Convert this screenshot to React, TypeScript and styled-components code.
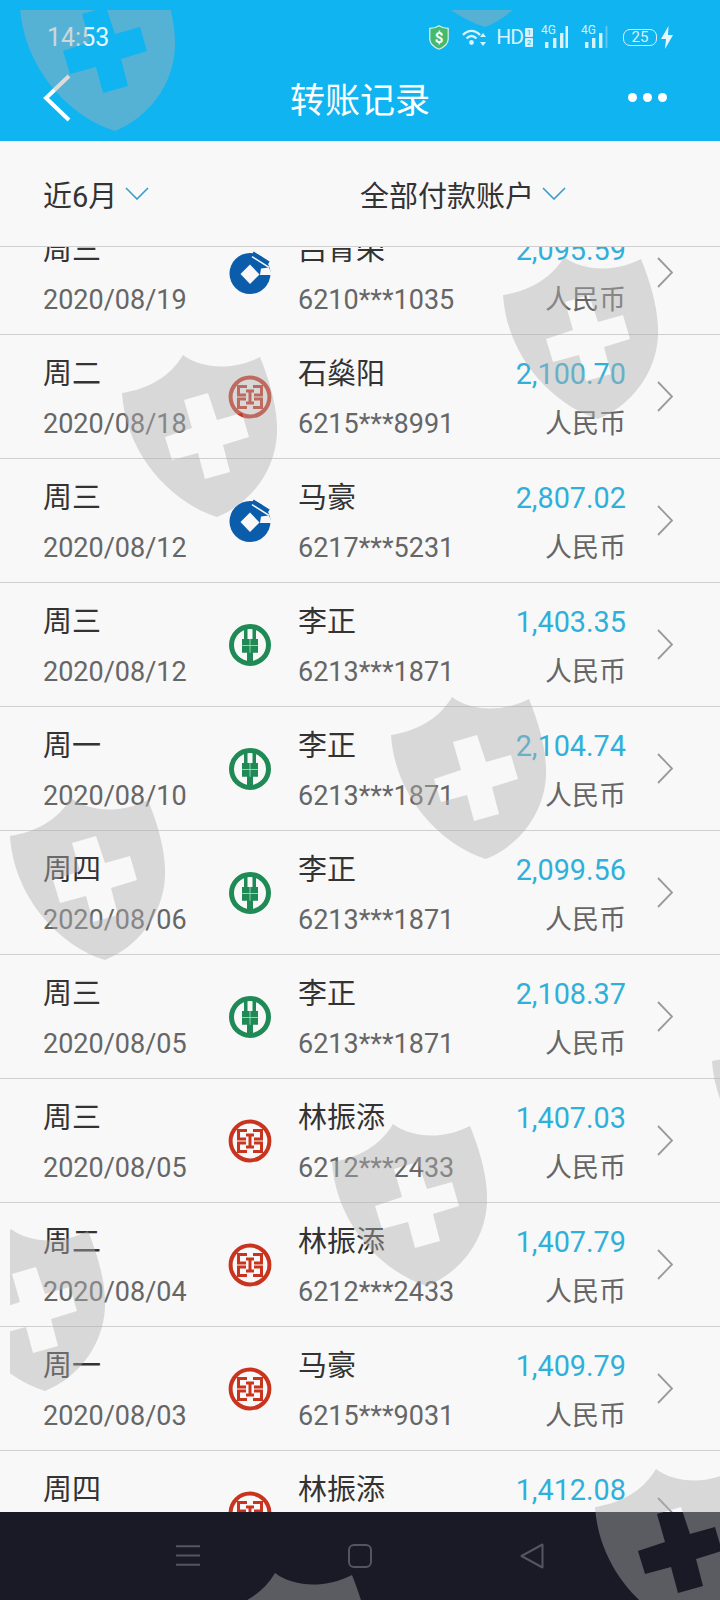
import { FC } from 'react'
import styled, { createGlobalStyle } from 'styled-components'

type Bank = 'ccb' | 'icbc' | 'abc'

const records: { day: string; date: string; bank: Bank; name: string; card: string; amount: string }[] = [
  { day: '周三', date: '2020/08/19', bank: 'ccb', name: '吕青荣', card: '6210***1035', amount: '2,095.59' },
  { day: '周二', date: '2020/08/18', bank: 'icbc', name: '石燊阳', card: '6215***8991', amount: '2,100.70' },
  { day: '周三', date: '2020/08/12', bank: 'ccb', name: '马豪', card: '6217***5231', amount: '2,807.02' },
  { day: '周三', date: '2020/08/12', bank: 'abc', name: '李正', card: '6213***1871', amount: '1,403.35' },
  { day: '周一', date: '2020/08/10', bank: 'abc', name: '李正', card: '6213***1871', amount: '2,104.74' },
  { day: '周四', date: '2020/08/06', bank: 'abc', name: '李正', card: '6213***1871', amount: '2,099.56' },
  { day: '周三', date: '2020/08/05', bank: 'abc', name: '李正', card: '6213***1871', amount: '2,108.37' },
  { day: '周三', date: '2020/08/05', bank: 'icbc', name: '林振添', card: '6212***2433', amount: '1,407.03' },
  { day: '周二', date: '2020/08/04', bank: 'icbc', name: '林振添', card: '6212***2433', amount: '1,407.79' },
  { day: '周一', date: '2020/08/03', bank: 'icbc', name: '马豪', card: '6215***9031', amount: '1,409.79' },
  { day: '周四', date: '2020/07/30', bank: 'icbc', name: '林振添', card: '6212***2433', amount: '1,412.08' },
]

// 水印盾牌的位置（页面坐标）
const shields = [
  { x: 20, y: -31 },
  { x: 390, y: -135 },
  { x: 503, y: 257 },
  { x: 122, y: 355 },
  { x: 391, y: 697 },
  { x: 10, y: 798 },
  { x: 712, y: 1023 },
  { x: 332, y: 1124 },
  { x: -50, y: 1229 },
  { x: 595, y: 1469 },
  { x: 214, y: 1573 },
]

const BankLogo: FC<{ bank: Bank }> = ({ bank }) => {
  if (bank === 'ccb') {
    return (
      <svg width="44" height="44" viewBox="0 0 44 44">
        <circle cx="22" cy="22.5" r="20.5" fill="#0b5cab" />
        <path d="M24.5 2.5 L40.5 12.3" stroke="#0b5cab" strokeWidth="4.4" fill="none" />
        <path d="M24 5.6 L41 16.4" stroke="#f8f8f8" strokeWidth="1.6" fill="none" />
        <path d="M22 13.5 L31.5 23.5 L22 33 L12.5 23 Z" fill="#f8f8f8" />
        <path d="M33 17.5 L41 16.4 L44 24 L32 24 Z" fill="#f8f8f8" />
      </svg>
    )
  }
  if (bank === 'abc') {
    return (
      <svg width="44" height="44" viewBox="0 0 44 44">
        <circle cx="22" cy="22" r="18.5" fill="none" stroke="#1f8a55" strokeWidth="5" />
        <path d="M16 3 H19.5 V16 H24.5 V3 H28 V16 H30 V29.7 H25 V40 H19 V29.7 H14 V16 H16 Z" fill="#1f8a55" />
        <path d="M14 22.5 H30 M22 16 V29.7" stroke="#9fdcb8" strokeWidth=".9" fill="none" />
      </svg>
    )
  }
  return (
    <svg width="44" height="44" viewBox="0 0 44 44">
      <circle cx="22" cy="22" r="19.4" fill="none" stroke="#c9341f" strokeWidth="4" />
      <path
        d="M19 11.5 H10.5 V20 H18 M25 11.5 H33.5 V20 H26 M19 32.5 H10.5 V24 H18 M25 32.5 H33.5 V24 H26 M18 16 H26 M22 15 V29 M18 28 H26"
        fill="none"
        stroke="#c9341f"
        strokeWidth="3"
      />
    </svg>
  )
}

const Chevron: FC<{ w: number; h: number; color: string; weight: number }> = ({ w, h, color, weight }) => (
  <svg width={w} height={h} viewBox={`0 0 ${w} ${h}`}>
    <path d={`M1 1 L${w - 1} ${h / 2} L1 ${h - 1}`} fill="none" stroke={color} strokeWidth={weight} />
  </svg>
)

const FilterChevron: FC = () => (
  <svg width="24" height="13" viewBox="0 0 24 13">
    <path d="M1 1 L12 12 L23 1" fill="none" stroke="#3a9cc4" strokeWidth="1.6" />
  </svg>
)

const App: FC = () => {
  return (
    <Page>
      <GlobalStyle />
      <Header>
        <StatusBar>
          <Clock>14:53</Clock>
          <StatusIcons>
            <svg width="20" height="25" viewBox="0 0 20 25">
              <path d="M10 .8 C13 2.8 16 3.4 19.2 3.4 V14 C19.2 19 14.5 22.4 10 24.2 C5.5 22.4 .8 19 .8 14 V3.4 C4 3.4 7 2.8 10 .8 Z" fill="#47b96c" stroke="#d9f3ea" strokeWidth="1.2" />
              <text x="10" y="18" fontSize="15" fontWeight="700" textAnchor="middle" fill="#fff" fontFamily="Roboto, sans-serif">$</text>
            </svg>
            <svg width="25" height="19" viewBox="0 0 25 19">
              <path d="M1 7 C6 1.5 13 1.5 18 7 M4.5 10.5 C8 7 11 7 14.5 10.5" fill="none" stroke="#d8f2fc" strokeWidth="2.4" />
              <circle cx="9.5" cy="14.5" r="2.4" fill="#d8f2fc" />
              <path d="M21 5 L24 9 H18 Z M21 18 L24 14 H18 Z" fill="#d8f2fc" />
            </svg>
            <HdMark>HD</HdMark>
            <HdStack>
              <HdCell>1</HdCell>
              <HdCell>2</HdCell>
            </HdStack>
            <SignalBox>
              <NetLabel>4G</NetLabel>
              <svg width="26" height="24" viewBox="0 0 26 24">
                <path d="M3 17 h3.4 v6 h-3.4 Z M11 13 h3.4 v10 h-3.4 Z M18 8 h3.4 v15 h-3.4 Z" fill="#d8f2fc" />
                <path d="M23.5 1 h2.5 v22 h-2.5 Z" fill="#d8f2fc" />
              </svg>
            </SignalBox>
            <SignalBox>
              <NetLabel>4G</NetLabel>
              <svg width="26" height="24" viewBox="0 0 26 24">
                <path d="M3 17 h3.4 v6 h-3.4 Z M10 13 h3.4 v10 h-3.4 Z M17 8 h3.4 v15 h-3.4 Z" fill="#d8f2fc" />
                <path d="M23.5 1 h2 v22 h-2 Z" fill="#5fc6ee" />
              </svg>
            </SignalBox>
            <Battery>25</Battery>
            <svg width="12" height="23" viewBox="0 0 12 23">
              <path d="M7.5 0 L0 13 H5 L4 23 L12 9 H7 Z" fill="#e8f7fd" />
            </svg>
          </StatusIcons>
        </StatusBar>
        <NavBar>
          <BackArrow width="28" height="48" viewBox="0 0 28 48">
            <path d="M26 2 L3 24 L26 46" fill="none" stroke="#fff" strokeWidth="4" />
          </BackArrow>
          <Title>转账记录</Title>
          <MoreDots>
            <Dot />
            <Dot />
            <Dot />
          </MoreDots>
        </NavBar>
      </Header>

      <FilterBar>
        <Filter>
          近6月
          <FilterChevron />
        </Filter>
        <Filter>
          全部付款账户
          <FilterChevron />
        </Filter>
      </FilterBar>

      <List>
        <ListInner>
          {records.map((r) => (
            <Row key={r.date + r.amount}>
              <Cell>
                <Primary>{r.day}</Primary>
                <Secondary>{r.date}</Secondary>
              </Cell>
              <BankLogo bank={r.bank} />
              <NameCell>
                <Primary>{r.name}</Primary>
                <Secondary>{r.card}</Secondary>
              </NameCell>
              <AmountCell>
                <Amount>{r.amount}</Amount>
                <Secondary>人民币</Secondary>
              </AmountCell>
              <Chevron w={16} h={31} color="#9a9a9a" weight={1.8} />
            </Row>
          ))}
        </ListInner>
      </List>

      <BottomNav>
        <svg width="24" height="21" viewBox="0 0 24 21">
          <path d="M0 1.2 H24 M0 10.5 H24 M0 19.8 H24" stroke="#55555f" strokeWidth="2" fill="none" />
        </svg>
        <svg width="24" height="24" viewBox="0 0 24 24">
          <rect x="1" y="1" width="22" height="22" rx="5" fill="none" stroke="#55555f" strokeWidth="2" />
        </svg>
        <svg width="24" height="26" viewBox="0 0 24 26">
          <path d="M22.5 1.5 V24.5 L1.5 13 Z" fill="none" stroke="#55555f" strokeWidth="2" strokeLinejoin="round" />
        </svg>
      </BottomNav>

      <Watermarks>
        {shields.map((s) => (
          <Shield key={`${s.x}-${s.y}`} $x={s.x - 10} $y={s.y - 10} width="155" height="162" viewBox="0 0 155 162">
            <path
              fillRule="evenodd"
              d="M61 0 C80 14 110 16 138 2 C146 22 154 46 155 70 C157 112 130 148 95 162 C50 148 4 100 0 38 C26 34 48 22 61 0 Z M62 45 L86 38 L95 65 L120 58 L127 82 L101 90 L108 117 L83 124 L76 98 L50 105 L43 82 L70 73 Z"
            />
          </Shield>
        ))}
      </Watermarks>
    </Page>
  )
}

const GlobalStyle = createGlobalStyle`
  body {
    margin: 0;
    background: #f8f8f8;
    font-family: Roboto, "Noto Sans CJK SC", sans-serif;
  }
`

const Page = styled.div`
  position: relative;
  width: 720px;
  height: 1600px;
  display: flex;
  flex-direction: column;
  overflow: hidden;
  background: #f8f8f8;
`

const Header = styled.header`
  height: 141px;
  flex: none;
  display: flex;
  flex-direction: column;
  background: #0fb4f1;
`

const StatusBar = styled.div`
  height: 72px;
  box-sizing: border-box;
  padding: 2px 47px 0 47px;
  display: flex;
  align-items: center;
  justify-content: space-between;
`

const Clock = styled.div`
  font-size: 25px;
  color: #e6f6fc;
`

const StatusIcons = styled.div`
  display: flex;
  align-items: center;
  gap: 13px;
`

const HdMark = styled.span`
  font-size: 21px;
  color: #d8f2fc;
  letter-spacing: -1px;
  margin-left: -4px;
`

const HdStack = styled.div`
  display: flex;
  flex-direction: column;
  gap: 1px;
  margin: 0 -4px 0 -11px;
`

const HdCell = styled.span`
  width: 8px;
  height: 9px;
  border-radius: 1px;
  background: #d8f2fc;
  color: #0fb4f1;
  font-size: 8px;
  line-height: 9px;
  text-align: center;
`

const SignalBox = styled.div`
  display: flex;
  align-items: flex-start;
  width: 27px;
  position: relative;
`

const NetLabel = styled.span`
  position: absolute;
  left: -1px;
  top: -1px;
  font-size: 12px;
  line-height: 13px;
  color: #d8f2fc;
`

const Battery = styled.div`
  width: 32px;
  height: 15px;
  border: 1.5px solid #d8f2fc;
  border-radius: 7px;
  font-size: 15px;
  line-height: 15px;
  color: #d8f2fc;
  text-align: center;
  margin: 0 -9px 0 1px;
`

const NavBar = styled.div`
  flex: 1;
  display: grid;
  grid-template-columns: 1fr auto 1fr;
  align-items: center;
  padding: 0 53px 18px 53px;
`

const BackArrow = styled.svg`
  margin-left: -10px;
`

const Title = styled.h1`
  margin: 0;
  font-size: 35px;
  font-weight: 400;
  color: #fff;
`

const MoreDots = styled.div`
  display: flex;
  gap: 6px;
  justify-self: end;
`

const Dot = styled.span`
  width: 9px;
  height: 9px;
  border-radius: 50%;
  background: #fff;
`

const FilterBar = styled.div`
  height: 105px;
  flex: none;
  border-bottom: 1px solid #cfcfcf;
  display: grid;
  grid-template-columns: 317px 1fr;
  align-items: center;
  padding-left: 43px;
`

const Filter = styled.div`
  display: flex;
  align-items: center;
  gap: 8px;
  font-size: 29px;
  color: #333;
`

const List = styled.main`
  flex: 1;
  overflow: hidden;
`

const ListInner = styled.div`
  margin-top: -36px;
`

const Row = styled.div`
  height: 124px;
  box-sizing: border-box;
  border-bottom: 1px solid #cfcfcf;
  display: grid;
  grid-template-columns: 185px 44px 1fr auto 16px;
  align-items: center;
  padding: 0 47px 0 43px;
`

const Cell = styled.div`
  height: 100%;
  box-sizing: border-box;
  padding-top: 19px;
  display: flex;
  flex-direction: column;
  gap: 10px;
  align-items: flex-start;
`

const NameCell = styled(Cell)`
  margin-left: 26px;
`

const AmountCell = styled(Cell)`
  align-items: flex-end;
  margin-right: 31px;
`

const Primary = styled.div`
  font-size: 29px;
  line-height: 40px;
  color: #333;
`

const Secondary = styled.div`
  font-size: 27px;
  line-height: 40px;
  color: #666;
`

const Amount = styled.div`
  font-size: 28.8px;
  line-height: 40px;
  color: #2fb0da;
`

const BottomNav = styled.nav`
  height: 88px;
  flex: none;
  background: #1a1926;
  display: flex;
  align-items: center;
  justify-content: center;
  gap: 148px;
  padding-bottom: 1px;
  box-sizing: border-box;
`

const Watermarks = styled.div`
  position: absolute;
  top: 10px;
  left: 10px;
  right: 0;
  bottom: 0;
  overflow: hidden;
  pointer-events: none;
`

const Shield = styled.svg<{ $x: number; $y: number }>`
  position: absolute;
  left: ${(p) => p.$x}px;
  top: ${(p) => p.$y}px;
  fill: rgba(175, 175, 175, 0.44);
`

export default App
